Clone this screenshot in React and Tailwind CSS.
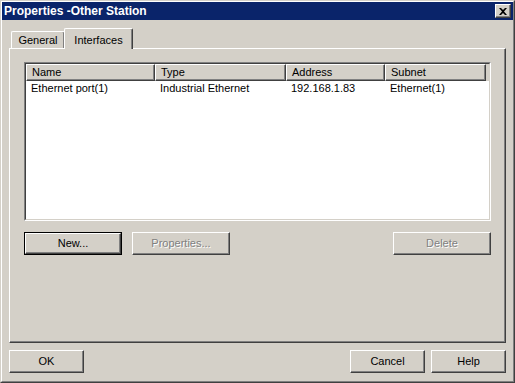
import React from "react";

const columns = [
  { name: "Name", width: "w-[129px]" },
  { name: "Type", width: "w-[131px]" },
  { name: "Address", width: "w-[99px]" },
  { name: "Subnet", width: "w-[101px]" },
];

const rows = [["Ethernet port(1)", "Industrial Ethernet", "192.168.1.83", "Ethernet(1)"]];

const raised =
  "border border-t-white border-l-white border-r-[#404040] border-b-[#404040] shadow-[inset_-1px_-1px_0_#808080]";

function Button({ children, disabled, isDefault, className = "" }) {
  const label = disabled ? (
    <span className="text-[#808080] [text-shadow:1px_1px_0_#ffffff]">{children}</span>
  ) : (
    <span className="text-black">{children}</span>
  );
  if (isDefault) {
    return (
      <div className={`border border-black flex ${className}`}>
        <div className={`flex-1 flex items-center justify-center bg-[#d4d0c8] ${raised}`}>{label}</div>
      </div>
    );
  }
  return (
    <div className={`flex items-center justify-center bg-[#d4d0c8] ${raised} ${className}`}>{label}</div>
  );
}

export default function App() {
  return (
    <div className="w-[515px] h-[383px] bg-[#d4d0c8] font-['Liberation_Sans',Arial,sans-serif] text-[11px] text-black border border-t-[#d4d0c8] border-l-[#d4d0c8] border-r-[#404040] border-b-[#404040]">
      <div className="h-full flex flex-col border-l border-t border-l-white border-t-white border-r border-b border-r-[#808080] border-b-[#808080]">
        {/* Title bar */}
        <div className="h-[18px] bg-[#0a246a] flex items-center justify-between pl-[2px] pr-[2px]">
          <span className="text-white font-bold text-[12px] leading-none">Properties -Other Station</span>
          <div className={`w-[16px] h-[14px] bg-[#d4d0c8] flex items-center justify-center ${raised}`}>
            <svg width="8" height="7" viewBox="0 0 8 7">
              <path d="M0 0h2l2 2 2-2h2L5 3.5 8 7H6L4 5 2 7H0l3-3.5z" fill="#000" />
            </svg>
          </div>
        </div>

        {/* Tabs */}
        <div className="mt-[8px] ml-[7px] h-[20px] flex items-end">
          <div className="ml-[2px] h-[17px] w-[54px] border-l border-t border-l-white border-t-white border-r border-r-[#404040] shadow-[inset_-1px_0_0_#808080] rounded-tl-[2px] rounded-tr-[2px] flex items-center justify-center pt-[1px]">
            General
          </div>
          <div className="relative z-10 -ml-[1px] h-[21px] -mb-[1px] w-[69px] bg-[#d4d0c8] border-l border-t border-l-white border-t-white border-r border-r-[#404040] shadow-[inset_-1px_0_0_#808080] rounded-tl-[2px] rounded-tr-[2px] flex items-start justify-center pt-[3px]">
            Interfaces
          </div>
        </div>

        {/* Tab panel */}
        <div className="ml-[7px] w-[497px] h-[295px] border border-t-white border-l-white border-r-[#404040] border-b-[#404040] shadow-[inset_-1px_-1px_0_#808080] px-[14px] pt-[13px]">
          {/* List view */}
          <div className="h-[159px] border border-t-[#808080] border-l-[#808080] border-r-white border-b-white">
            <div className="h-full bg-white border border-t-[#404040] border-l-[#404040] border-r-[#d4d0c8] border-b-[#d4d0c8]">
              <div className="flex h-[17px] bg-[#d4d0c8]">
                {columns.map((c) => (
                  <div key={c.name} className={`${c.width} h-full flex items-center pl-[5px] pb-[1px] ${raised}`}>
                    {c.name}
                  </div>
                ))}
              </div>
              {rows.map((r, i) => (
                <div key={i} className="flex h-[15px] items-center">
                  {r.map((cell, j) => (
                    <div key={j} className={`${columns[j].width} pl-[5px] whitespace-nowrap`}>
                      {cell}
                    </div>
                  ))}
                </div>
              ))}
            </div>
          </div>

          {/* Buttons */}
          <div className="mt-[11px] flex items-center">
            <Button isDefault className="w-[98px] h-[23px]">New...</Button>
            <Button disabled className="ml-[10px] w-[98px] h-[23px]">Properties...</Button>
            <div className="flex-1" />
            <Button disabled className="w-[98px] h-[23px]">Delete</Button>
          </div>
        </div>

        {/* Footer buttons */}
        <div className="mt-[7px] ml-[7px] mr-[7px] flex items-center">
          <Button className="w-[75px] h-[23px]">OK</Button>
          <div className="flex-1" />
          <Button className="w-[75px] h-[23px]">Cancel</Button>
          <Button className="ml-[6px] w-[75px] h-[23px]">Help</Button>
        </div>
      </div>
    </div>
  );
}
